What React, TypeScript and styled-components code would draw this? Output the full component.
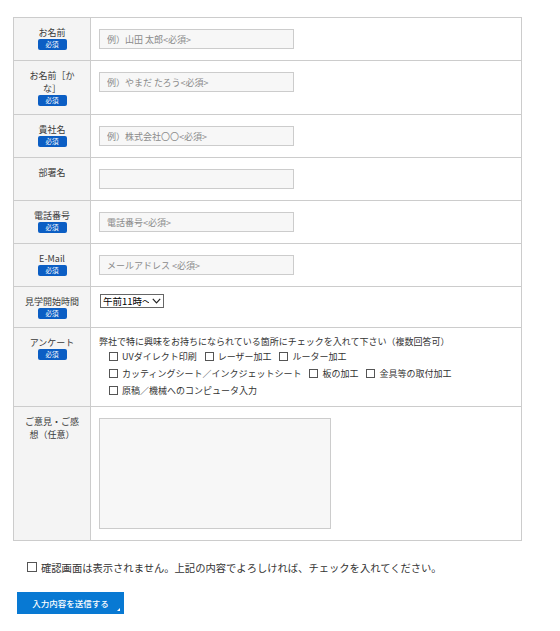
import React from "react";
import styled, { createGlobalStyle } from "styled-components";

const GlobalStyle = createGlobalStyle`
  * {
    box-sizing: border-box;
  }
  body {
    margin: 0;
    background: #fff;
    color: #333;
    font-family: "Noto Sans CJK JP", "Noto Sans", sans-serif;
  }
`;

const Page = styled.div`
  padding: 17px 0 0 13px;
`;

const FormTable = styled.div`
  width: 509px;
  border: 1px solid #ccc;
`;

const Row = styled.div`
  display: grid;
  grid-template-columns: 77px 1fr;
  border-bottom: 1px solid #ccc;
  &:last-child {
    border-bottom: none;
  }
`;

const LabelCell = styled.div`
  background: #f4f4f4;
  border-right: 1px solid #ccc;
  padding: 8px 10px;
  text-align: center;
  font-size: 9px;
  line-height: 13px;
  color: #3a3a3a;
`;

const Badge = styled.span`
  display: block;
  width: 29px;
  height: 11px;
  margin: 0 auto;
  border-radius: 2px;
  background: #0b5ec4;
  color: #fff;
  font-size: 6.5px;
  line-height: 11px;
  text-align: center;
`;

const ValueCell = styled.div<{ $pad?: number }>`
  padding: ${(p) => p.$pad ?? 11}px 8px;
  font-size: 9px;
  line-height: 13px;
`;

const TextInput = styled.input`
  display: block;
  width: 195px;
  height: 20px;
  margin: 0;
  padding: 0 7px;
  border: 1px solid #ccc;
  border-radius: 0;
  background: #f7f7f7;
  font-family: inherit;
  font-size: 9px;
  color: #333;
  &::placeholder {
    color: #8a8a8a;
  }
`;

const SelectWrap = styled.span`
  position: relative;
  display: inline-block;
  margin-left: 1px;
`;

const TimeSelect = styled.select`
  appearance: none;
  display: block;
  width: 64px;
  height: 14px;
  margin: 0;
  padding: 0 14px 0 2px;
  border: 1px solid #666;
  border-radius: 0;
  background: #fff;
  font-family: inherit;
  font-size: 9.5px;
  line-height: 12px;
  color: #000;
`;

const Chevron = styled.svg`
  position: absolute;
  right: 3px;
  top: 4px;
  width: 9px;
  height: 6px;
  pointer-events: none;
`;

const Lead = styled.div`
  font-size: 9px;
  line-height: 13px;
  color: #333;
`;

const CheckRow = styled.div`
  display: flex;
  align-items: center;
  padding-left: 10px;
  height: 17px;
`;

const CheckItem = styled.label`
  display: inline-flex;
  align-items: center;
  margin-right: 8px;
  font-size: 9px;
  color: #333;
  white-space: nowrap;
`;

const Box = styled.input.attrs({ type: "checkbox" })<{ $size?: number }>`
  appearance: none;
  width: ${(p) => p.$size ?? 9}px;
  height: ${(p) => p.$size ?? 9}px;
  margin: 0 4px 0 0;
  border: 1px solid #555;
  border-radius: 0;
  background: #fff;
  flex: none;
`;

const Comment = styled.textarea`
  display: block;
  width: 232px;
  height: 111px;
  margin: 0;
  border: 1px solid #ccc;
  border-radius: 0;
  background: #f7f7f7;
  resize: none;
  font-family: inherit;
`;

const Agree = styled.label`
  display: flex;
  align-items: center;
  margin: 18px 0 0 14px;
  height: 16px;
  font-size: 10.3px;
  color: #333;
`;

const SubmitButton = styled.button`
  position: relative;
  display: block;
  width: 107px;
  height: 22px;
  margin: 17px 0 0 4px;
  border: none;
  border-radius: 0;
  background: #0879d3;
  color: #fff;
  font-family: inherit;
  font-size: 8.5px;
  font-weight: 500;
  cursor: pointer;
  &::after {
    content: "";
    position: absolute;
    right: 4px;
    bottom: 3px;
    width: 0;
    height: 0;
    border-top: 3px solid transparent;
    border-right: 3px solid #fff;
  }
`;

type Field = {
  label: string;
  required: boolean;
  placeholder: string;
};

const fields: Field[] = [
  { label: "お名前", required: true, placeholder: "例）山田 太郎<必須>" },
  { label: "お名前［かな］", required: true, placeholder: "例）やまだ たろう<必須>" },
  { label: "貴社名", required: true, placeholder: "例）株式会社〇〇<必須>" },
  { label: "部署名", required: false, placeholder: "" },
  { label: "電話番号", required: true, placeholder: "電話番号<必須>" },
  { label: "E-Mail", required: true, placeholder: "メールアドレス <必須>" },
];

const surveyRows = [
  ["UVダイレクト印刷", "レーザー加工", "ルーター加工"],
  ["カッティングシート／インクジェットシート", "板の加工", "金具等の取付加工"],
  ["原稿／機械へのコンピュータ入力"],
];

function App() {
  return (
    <Page>
      <GlobalStyle />
      <FormTable>
        {fields.map((f) => (
          <Row key={f.label}>
            <LabelCell>
              {f.label}
              {f.required && <Badge>必須</Badge>}
            </LabelCell>
            <ValueCell>
              <TextInput type="text" placeholder={f.placeholder} />
            </ValueCell>
          </Row>
        ))}
        <Row>
          <LabelCell>
            見学開始時間
            <Badge>必須</Badge>
          </LabelCell>
          <ValueCell $pad={7}>
            <SelectWrap>
              <TimeSelect defaultValue="11">
                <option value="10">午前10時～</option>
                <option value="11">午前11時～</option>
                <option value="13">午後1時～</option>
              </TimeSelect>
              <Chevron viewBox="0 0 9 6">
                <path d="M0.8 0.8 L4.5 4.8 L8.2 0.8" fill="none" stroke="#222" strokeWidth="1.2" />
              </Chevron>
            </SelectWrap>
          </ValueCell>
        </Row>
        <Row>
          <LabelCell>
            アンケート
            <Badge>必須</Badge>
          </LabelCell>
          <ValueCell $pad={7}>
            <Lead>弊社で特に興味をお持ちになられている箇所にチェックを入れて下さい（複数回答可）</Lead>
            {surveyRows.map((row, i) => (
              <CheckRow key={i}>
                {row.map((item) => (
                  <CheckItem key={item}>
                    <Box />
                    {item}
                  </CheckItem>
                ))}
              </CheckRow>
            ))}
          </ValueCell>
        </Row>
        <Row>
          <LabelCell>ご意見・ご感想（任意）</LabelCell>
          <ValueCell>
            <Comment />
          </ValueCell>
        </Row>
      </FormTable>
      <Agree>
        <Box $size={10} />
        確認画面は表示されません。上記の内容でよろしければ、チェックを入れてください。
      </Agree>
      <SubmitButton type="button">入力内容を送信する</SubmitButton>
    </Page>
  );
}

export default App;
